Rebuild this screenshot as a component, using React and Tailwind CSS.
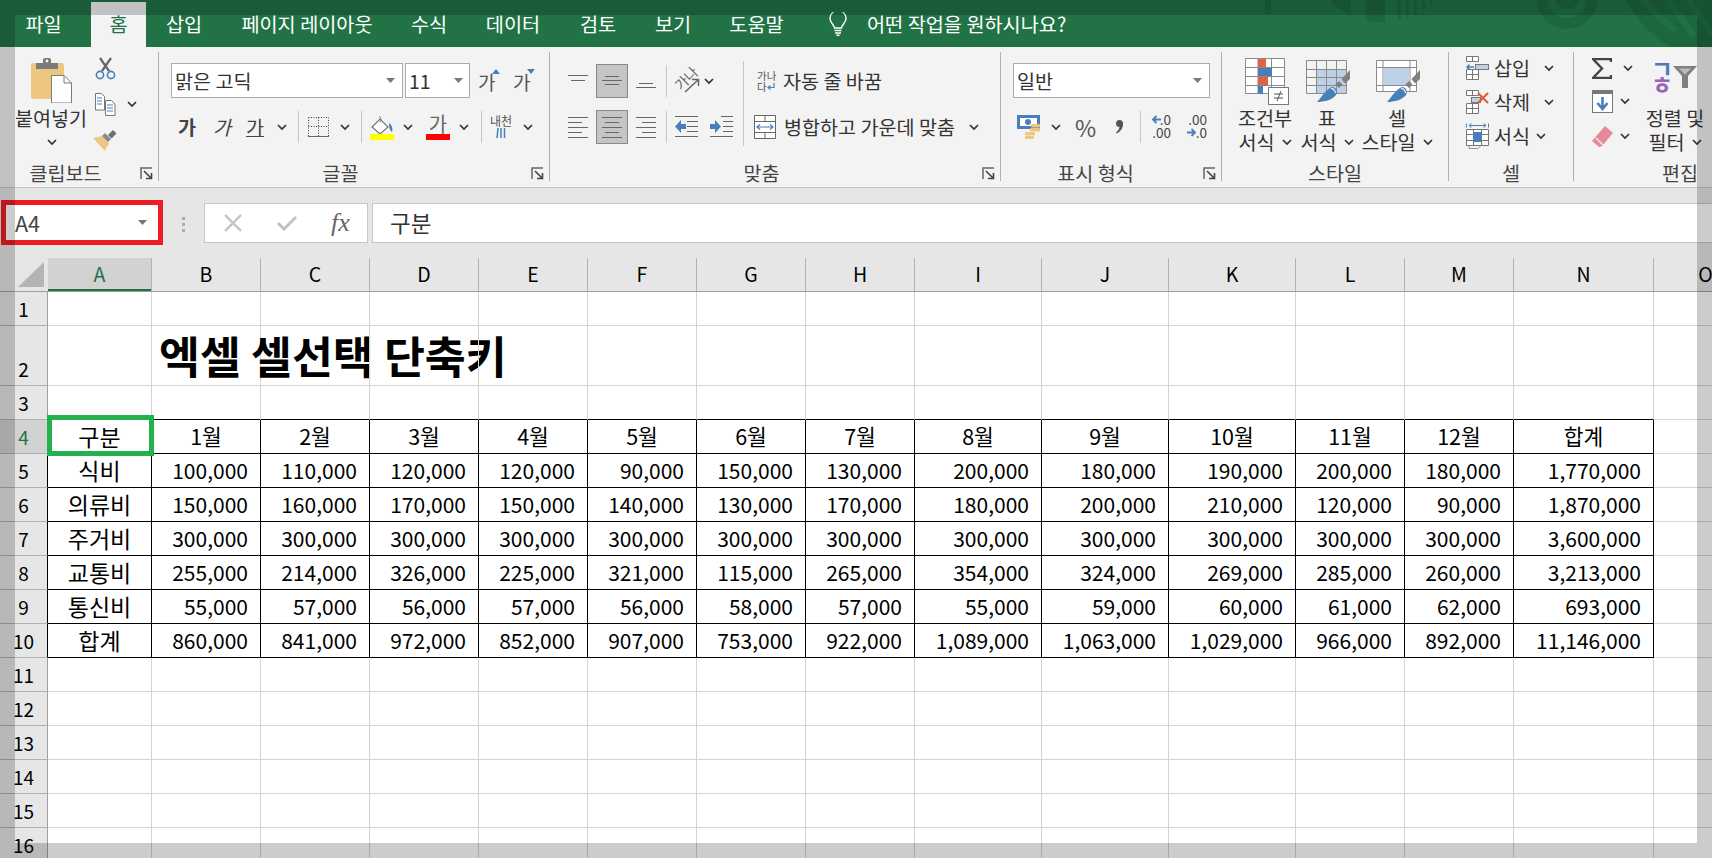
import React from 'react';

const Chevron = ({ className = '' }) => (
  <svg width="10" height="7" viewBox="0 0 10 7" className={`shrink-0 ${className}`}>
    <path d="M1 1l4 4 4-4" fill="none" stroke="#333" strokeWidth="1.7" />
  </svg>
);

const Arrow = () => (
  <svg width="9" height="5" viewBox="0 0 9 5" className="shrink-0"><path d="M0 0h9L4.5 5z" fill="#777" /></svg>
);

const Launcher = () => (
  <svg width="13" height="13" viewBox="0 0 13 13" className="shrink-0">
    <path d="M1 12V1h11" fill="none" stroke="#666" strokeWidth="1.5" />
    <path d="M4 4l7 7M11.5 6v5.5H6" fill="none" stroke="#444" strokeWidth="1.6" />
  </svg>
);

const Sep = () => <div className="w-px h-[32px] bg-[#c6c6c6] shrink-0" />;

const Lines = ({ rows }) => (
  <svg width="20" height="22" viewBox="0 0 20 22" className="shrink-0">
    {rows.map(([x1, x2, y]) => (
      <path key={y} d={`M${x1} ${y}.5H${x2}`} stroke="#666" strokeWidth="1" />
    ))}
  </svg>
);

const AlignBtn = ({ rows, on }) => (
  <div className={on ? 'w-[32px] h-[34px] bg-[#c5c5c5] border border-[#8a8a8a] flex items-center justify-center shrink-0 ml-[8px]' : 'w-[20px] h-[34px] flex items-center justify-center shrink-0 ml-[8px]'}>
    <Lines rows={rows} />
  </div>
);

const Group = ({ w, label, launcher, labelClass = '', children }) => (
  <div className={`${w} h-[129px] border-r border-[#b1b1b1] flex flex-col shrink-0`}>
    <div className="h-[108px] relative">{children}</div>
    <div className="h-[21px] flex items-center pt-[4px] text-[#444]">
      <div className={`flex-1 text-center whitespace-nowrap ${labelClass}`}>{label}</div>
      {launcher && <div className="mr-[5px] mt-[1px]"><Launcher /></div>}
    </div>
  </div>
);

const Combo = ({ className, text, arrowClass }) => (
  <div className={`h-[35px] bg-white border border-[#ababab] flex items-center justify-between shrink-0 ${className}`}>
    <span className="pl-[3px] text-[#333]">{text}</span>
    <span className={arrowClass}><Arrow /></span>
  </div>
);

const PasteIcon = () => (
  <svg width="42" height="46" viewBox="0 0 42 46">
    <rect x="0" y="6" width="33" height="36" rx="2" fill="#edc77f" />
    <path d="M5 12V6h7V3a2 2 0 012-2h4a2 2 0 012 2v3h7v6z" fill="#7b7b7b" />
    <circle cx="16" cy="4" r="1.4" fill="#f3f3f3" />
    <path d="M20.5 18.5H33L40.5 26v20h-20z" fill="#fff" stroke="#7b7b7b" strokeWidth="1" />
    <path d="M33 18.5V26h7.5" fill="none" stroke="#7b7b7b" strokeWidth="1" />
  </svg>
);

const CutIcon = () => (
  <svg width="21" height="23" viewBox="0 0 21 23">
    <path d="M7 14L16 1M14 14L5 1" stroke="#666" strokeWidth="2.2" />
    <circle cx="5" cy="18" r="3.6" fill="none" stroke="#4a7ebb" strokeWidth="1.6" />
    <circle cx="16" cy="18" r="3.6" fill="none" stroke="#4a7ebb" strokeWidth="1.6" />
  </svg>
);

const CopyIcon = () => (
  <svg width="21" height="23" viewBox="0 0 21 23">
    <path d="M.5.5h6l3 3V17H.5z" fill="#fff" stroke="#777" />
    <path d="M10.5 7.5h6l3.5 3.5v11.5h-9.5z" fill="#fff" stroke="#777" />
    <path d="M2 5h5M2 8h5M2 11h5" stroke="#4a7ebb" />
    <path d="M12 12h6M12 15h6M12 18h6" stroke="#4a7ebb" />
  </svg>
);

const PainterIcon = () => (
  <svg width="24" height="21" viewBox="0 0 24 21">
    <path d="M0 8l9-2 7 7-4 8z" fill="#edc77f" />
    <path d="M9 5l3-3 6 6-3 3z" fill="#8a8a8a" transform="translate(0 1)" />
    <path d="M15 5l5-5 3.5 3.5-5 5z" fill="#6f6f6f" />
  </svg>
);

const BorderIcon = () => (
  <svg width="21" height="20" viewBox="0 0 21 20">
    <path d="M.5.5h20v19M.5.5v19M10.5.5v19M.5 9.5h20" fill="none" stroke="#444" strokeDasharray="1 1.5" />
    <path d="M0 19.5h21" stroke="#666" />
  </svg>
);

const FillIcon = () => (
  <svg width="24" height="24" viewBox="0 0 24 24">
    <path d="M2 11l8-8 8 8-8 7z" fill="#fff" stroke="#777" strokeWidth="1.2" />
    <path d="M9 0.5c2 0 2 3 1 6" fill="none" stroke="#777" />
    <path d="M19 7c3 2 4 6 3 9-2-1-3-4-3-9z" fill="#4a7ebb" />
    <rect x="0" y="18" width="24" height="6" fill="#ffff00" />
  </svg>
);

const ColorIcon = () => (
  <div className="w-[24px] h-[26px] flex flex-col items-center shrink-0">
    <span className="text-[20px] leading-[20px] text-[#666]">가</span>
    <div className="w-full h-[6px] bg-[#ff0000]" />
  </div>
);

const PhoneticIcon = () => (
  <div className="w-[22px] h-[26px] flex flex-col items-center shrink-0">
    <span className="text-[12px] leading-[13px] text-[#555] whitespace-nowrap">내천</span>
    <svg width="10" height="12" viewBox="0 0 10 12"><path d="M2 1L1 11M5 1v10M8.5 1v10" stroke="#4a7ebb" strokeWidth="1.5" fill="none" /></svg>
  </div>
);

const GrowFont = ({ down }) => (
  <div className="w-[20px] h-[26px] flex items-end shrink-0 relative">
    <span className="text-[19px] leading-[22px] text-[#555]">가</span>
    <svg width="8" height="5" viewBox="0 0 8 5" className="absolute right-[-2px] top-[2px]">
      <path d={down ? 'M0 0h8L4 5z' : 'M0 5h8L4 0z'} fill="#4a7ebb" />
    </svg>
  </div>
);

const OrientIcon = () => (
  <div className="w-[25px] h-[28px] relative flex items-center justify-center shrink-0">
    <span className="-rotate-45 text-[14px] leading-none text-[#666] whitespace-nowrap -translate-x-[2px] -translate-y-[3px]">가나</span>
    <svg width="25" height="28" viewBox="0 0 25 28" className="absolute left-0 top-0">
      <path d="M10 25L23 13M17 12.5h6.5V19" fill="none" stroke="#666" strokeWidth="1.5" />
    </svg>
  </div>
);

const IndentIcon = ({ inc }) => (
  <svg width="23" height="22" viewBox="0 0 23 22" className="shrink-0">
    {inc ? (
      <>
        <path d="M0 8h5V4l6 6.5-6 6.5v-4H0z" fill="#4a7ebb" />
        <path d="M11 .5h12M13 5.5h10M13 10.5h10M13 15.5h10M0 20.5h23" stroke="#666" />
      </>
    ) : (
      <>
        <path d="M11 8H6V4L0 10.5 6 17v-4h5z" fill="#4a7ebb" />
        <path d="M0 .5h23M12 5.5h11M12 10.5h11M12 15.5h11M0 20.5h23" stroke="#666" />
      </>
    )}
  </svg>
);

const WrapIcon = () => (
  <div className="w-[18px] flex flex-col text-[10.5px] leading-[11px] text-[#555] shrink-0">
    <span className="whitespace-nowrap">가나</span>
    <div className="flex items-center">
      <span>다</span>
      <svg width="8" height="8" viewBox="0 0 8 8"><path d="M7 0v4.5H1.5M3.5 2.5L1 4.5l2.5 2" fill="none" stroke="#4a7ebb" strokeWidth="1.2" /></svg>
    </div>
  </div>
);

const MergeIcon = () => (
  <svg width="22" height="24" viewBox="0 0 22 24" className="shrink-0">
    <path d="M.5.5h21v23H.5zM.5 6.5h21M.5 17.5h21M11 .5v6M11 17.5v6" fill="#fff" stroke="#666" />
    <path d="M3 12h16M6 9.5L3 12l3 2.5M16 9.5l3 2.5-3 2.5" fill="none" stroke="#4a7ebb" strokeWidth="1.2" />
  </svg>
);

const CurrencyIcon = () => (
  <svg width="24" height="24" viewBox="0 0 24 24" className="shrink-0">
    <rect x="0" y="0" width="23" height="14" fill="#4a7ebb" />
    <rect x="3" y="3" width="17" height="8" fill="#fff" />
    <circle cx="11" cy="7" r="3" fill="#4a7ebb" />
    <rect x="14" y="9" width="9" height="3.5" rx="1" fill="#edc77f" />
    <rect x="13" y="13" width="10" height="3.5" rx="1" fill="#edc77f" />
    <rect x="8" y="17" width="10" height="3.5" rx="1" fill="#edc77f" />
    <rect x="8" y="21" width="9" height="3" rx="1" fill="#edc77f" />
  </svg>
);

const CommaIcon = () => (
  <svg width="8" height="14" viewBox="0 0 8 14" className="shrink-0">
    <circle cx="4.5" cy="3.5" r="3.5" fill="#555" />
    <path d="M8 4c0 4-2 7-6 9.5L1 12.5c2.5-2 3.5-4 3.5-6z" fill="#555" />
  </svg>
);

const DecimalIcon = ({ top, bottom, left, inc }) => (
  <div className="w-[22px] h-[28px] flex flex-col text-[13.5px] leading-[13px] text-[#444] shrink-0">
    {[top, bottom].map((t, i) => (
      <div key={i} className="flex items-center justify-end h-[13px]">
        {left === i && (
          <svg width="10" height="9" viewBox="0 0 10 9" className="mr-[-1px]">
            <path d={inc ? 'M0 4.5h7M4.5 1L8 4.5 4.5 8' : 'M10 4.5H3M5.5 1L2 4.5 5.5 8'} fill="none" stroke="#4a7ebb" strokeWidth="1.8" />
          </svg>
        )}
        <span>{t}</span>
      </div>
    ))}
  </div>
);

const CfIcon = () => (
  <svg width="44" height="47" viewBox="0 0 44 47">
    <path d="M.5.5h39v35H.5zM.5 9.5h39M.5 18.5h39M.5 27.5h39M13 .5v35M26.5 .5v35" fill="#fff" stroke="#8a8a8a" />
    <rect x="13" y="1" width="8" height="8" fill="#dd6344" />
    <rect x="13" y="10" width="14" height="8" fill="#4a7ebb" />
    <rect x="13" y="19" width="10" height="8" fill="#dd6344" />
    <rect x="13" y="28" width="5" height="8" fill="#4a7ebb" />
    <rect x="23.5" y="29.5" width="20" height="17" fill="#fff" stroke="#777" />
    <path d="M29 36h9M29 40h9M36 33l-4 10" fill="none" stroke="#555" />
  </svg>
);

const Brush = () => (
  <>
    <path d="M11 42C16 37 19 30 26 27c4 0 6 4 4 8-4 5-12 7-19 7z" fill="#4a7ebb" />
    <path d="M25 29c2-1 4 1 4.5 4" fill="none" stroke="#f3f3f3" strokeWidth="1.2" />
    <path d="M33 21l3.5 3.5L33 28l-3.5-3.5z" fill="#808080" />
    <path d="M35.5 19L44 10v9l-5 4.5z" fill="#808080" />
  </>
);

const TableIcon = () => (
  <svg width="46" height="44" viewBox="0 0 46 44">
    <rect x="10" y="10" width="30" height="24" fill="#bdd0e6" />
    <path d="M.5.5h40v33H.5zM.5 9.5h40M.5 17.5h40M.5 25.5h40M10.5 .5v33M20.5 .5v33M30.5 .5v33" fill="none" stroke="#8a8a8a" />
    <Brush />
  </svg>
);

const CellStyleIcon = () => (
  <svg width="46" height="44" viewBox="0 0 46 44">
    <path d="M.5.5h40v31H.5z" fill="#fff" stroke="#8a8a8a" />
    <path d="M7 .5v31M34 .5v31M.5 7.5h40M.5 25.5h40" fill="none" stroke="#8a8a8a" />
    <rect x="7.5" y="8" width="26" height="17" fill="#bdd0e6" />
    <Brush />
  </svg>
);

const InsertIcon = () => (
  <svg width="23" height="24" viewBox="0 0 23 24" className="shrink-0">
    <path d="M.5.5h12v5H.5zM.5 13.5h12v10H.5zM.5 18.5h12M6.5 13.5v10M6.5 .5v5" fill="#fff" stroke="#777" />
    <rect x="9.5" y="8.5" width="13" height="5" fill="#bdd0e6" stroke="#777" />
    <path d="M8 11H1M3.5 8.5L1 11l2.5 2.5" fill="none" stroke="#4a7ebb" strokeWidth="1.5" />
  </svg>
);

const DeleteIcon = () => (
  <svg width="23" height="24" viewBox="0 0 23 24" className="shrink-0">
    <path d="M.5.5h12v5H.5zM.5 13.5h12v10H.5zM.5 18.5h12M6.5 13.5v10M6.5 .5v5" fill="#fff" stroke="#777" />
    <rect x="5.5" y="7.5" width="9" height="5" fill="#bdd0e6" stroke="#777" />
    <path d="M12 3l10 10M22 3L12 13" stroke="#dd5a36" strokeWidth="2" />
  </svg>
);

const FormatIcon = () => (
  <svg width="23" height="26" viewBox="0 0 23 26" className="shrink-0">
    <path d="M.5.5v4M22.5 .5v4M3 2.5h17M5.5 .5L3 2.5l2.5 2M17.5 .5L20 2.5l-2.5 2" fill="none" stroke="#4a7ebb" />
    <path d="M.5 6.5h22v16H.5zM.5 11.5h22M.5 17.5h22M7.5 6.5v16M15.5 6.5v16" fill="#fff" stroke="#777" />
    <rect x="7" y="9" width="9" height="10" fill="#4a7ebb" />
    <path d="M3 22.5v3h9l3-3" fill="none" stroke="#999" />
  </svg>
);

const SumIcon = () => (
  <svg width="20" height="21" viewBox="0 0 20 21" className="shrink-0">
    <path d="M19 4V1H1l9 9.5L1 20h18v-3" fill="none" stroke="#444" strokeWidth="2.4" />
  </svg>
);

const FillDownIcon = () => (
  <svg width="21" height="23" viewBox="0 0 21 23" className="shrink-0">
    <rect x=".5" y=".5" width="20" height="22" fill="#fff" stroke="#777" />
    <rect x="0" y="0" width="21" height="4" fill="#777" />
    <path d="M10.5 7v12M5.5 13l5 6 5-6" fill="none" stroke="#4a7ebb" strokeWidth="2.6" />
  </svg>
);

const EraserIcon = () => (
  <svg width="21" height="21" viewBox="0 0 21 21" className="shrink-0">
    <path d="M13 0l8 7-11 13-3 1-7-6z" fill="#e8899b" />
    <path d="M4 12l7 7" stroke="#f3f3f3" strokeWidth="1.2" />
  </svg>
);

const SortIcon = () => (
  <div className="relative w-[62px] h-[34px] shrink-0">
    <span className="absolute left-[-3px] top-[-6px] text-[24px] leading-[26px] font-bold text-[#4a7ebb]">ㄱ</span>
    <span className="absolute left-[-3px] top-[10px] text-[24px] leading-[26px] font-bold text-[#9a64b8]">ㅎ</span>
    <svg width="24" height="22" viewBox="0 0 24 22" className="absolute left-[19px] top-[5px]">
      <path d="M0 0h24L15 10v12H9V10z" fill="#808080" />
      <path d="M6 2.5h12l-6 6z" fill="#bdbdbd" />
    </svg>
  </div>
);

const tabs = [
  ['파일', 'w-[91px] pr-[4px]'],
  ['홈', 'w-[55px] bg-[#f3f3f3] text-[#217346]'],
  ['삽입', 'w-[76px]'],
  ['페이지 레이아웃', 'w-[170px]'],
  ['수식', 'w-[74px]'],
  ['데이터', 'w-[94px]'],
  ['검토', 'w-[76px]'],
  ['보기', 'w-[74px]'],
  ['도움말', 'w-[93px]'],
];

const TitleBar = () => (
  <div className="relative h-[47px] shrink-0 bg-[#217346] pt-[2px] flex text-white text-[19.7px] leading-[43px] overflow-hidden">
    <svg width="512" height="47" viewBox="1200 0 512 47" className="absolute right-0 top-0">
      <g fill="#000" fillOpacity="0.1">
        <rect x="1265" y="0" width="6" height="14" />
        <path d="M1332 0h19v15l-19-11z" />
        <path d="M1366 0h19v23l-19-2z" />
        <path d="M1398 0h3v20h-3zM1406 0h3v17h-3zM1414 0h3v15h-3zM1422 0h3v10h-3zM1430 0h2v5h-2z" />
        <path fillRule="evenodd" d="M1567 29a31 31 0 000-62 31 31 0 000 62zm0-11a20 20 0 010-40 20 20 0 010 40z" />
        <circle cx="1567" cy="-3" r="12" />
        <circle cx="1730" cy="-55" r="118" />
      </g>
      <path d="M1642 0l33 31M1668 0l26 36M1688 0l24 34" stroke="#217346" strokeOpacity="0.8" strokeWidth="6" fill="none" />
    </svg>
    {tabs.map(([t, c]) => (
      <div key={t} className={`relative text-center whitespace-nowrap shrink-0 ${c}`}>{t}</div>
    ))}
    <svg width="20" height="24" viewBox="0 0 20 24" className="relative ml-[25px] mt-[10px] shrink-0">
      <path d="M6.5 16c0-3-4.5-5-4.5-9.5a7.7 7.7 0 0116 0c0 4.5-4.5 6.5-4.5 9.5z" fill="none" stroke="#fff" strokeWidth="1.4" />
      <path d="M6.5 18.5h7M7 21h6M8.5 23.2h3" stroke="#fff" strokeWidth="1.4" />
    </svg>
    <div className="relative ml-[19px] whitespace-nowrap">어떤 작업을 원하시나요?</div>
  </div>
);

const Ribbon = () => (
  <div className="h-[141px] shrink-0 bg-[#f3f3f3] border-b border-[#c6c6c6] pt-[5px] flex text-[19.6px] text-[#333] overflow-hidden">
    <Group w="w-[159px]" label="클립보드" launcher labelClass="pr-[9px]">
      <div className="flex h-full">
        <div className="w-[104px] flex flex-col items-center pt-[5px]">
          <PasteIcon />
          <div className="mt-[2px] leading-[26px] whitespace-nowrap -ml-[2px]">붙여넣기</div>
          <Chevron className="mt-[8px]" />
        </div>
        <div className="flex flex-col items-start pt-[5px] -ml-[9px]">
          <CutIcon />
          <div className="flex items-center mt-[13px]"><CopyIcon /><Chevron className="ml-[11px]" /></div>
          <div className="mt-[14px] -ml-[2px]"><PainterIcon /></div>
        </div>
      </div>
    </Group>

    <Group w="w-[391px]" label="글꼴" launcher labelClass="pr-[9px]">
      <div className="flex items-start pl-[12px] pt-[11px]">
        <Combo className="w-[232px]" text="맑은 고딕" arrowClass="pr-[7px]" />
        <Combo className="w-[65px] ml-[2px]" text="11" arrowClass="pr-[6px]" />
        <div className="ml-[8px] mt-[4px]"><GrowFont /></div>
        <div className="ml-[15px] mt-[4px]"><GrowFont down /></div>
      </div>
      <div className="flex items-center pl-[19px] mt-[16px] h-[26px]">
        <span className="w-[18px] font-bold text-[#444]">가</span>
        <span className="w-[18px] ml-[17px] italic text-[#444]">가</span>
        <span className="w-[18px] ml-[15px] underline text-[#444]">가</span>
        <Chevron className="ml-[13px]" />
        <div className="ml-[11px]"><Sep /></div>
        <div className="ml-[9px]"><BorderIcon /></div>
        <Chevron className="ml-[11px]" />
        <div className="ml-[11px]"><Sep /></div>
        <div className="ml-[8px] mt-[1px]"><FillIcon /></div>
        <Chevron className="ml-[9px]" />
        <div className="ml-[13px]"><ColorIcon /></div>
        <Chevron className="ml-[9px]" />
        <div className="ml-[12px]"><Sep /></div>
        <div className="ml-[8px]"><PhoneticIcon /></div>
        <Chevron className="ml-[11px]" />
      </div>
    </Group>

    <Group w="w-[451px]" label="맞춤" launcher labelClass="pr-[9px]">
      <div className="flex h-full">
        <div className="w-[193px] pt-[12px] shrink-0">
          <div className="flex items-center pl-[10px] h-[34px]">
            <AlignBtn rows={[[0, 20, 5], [3, 17, 10]]} />
            <AlignBtn on rows={[[3, 17, 6], [0, 20, 10], [3, 17, 14]]} />
            <AlignBtn rows={[[3, 17, 13], [0, 20, 17]]} />
            <div className="ml-[10px]"><Sep /></div>
            <div className="ml-[8px]"><OrientIcon /></div>
            <Chevron className="ml-[4px]" />
          </div>
          <div className="flex items-center pl-[10px] h-[34px] mt-[12px]">
            <AlignBtn rows={[[0, 20, 1], [0, 14, 6], [0, 20, 11], [0, 14, 16], [0, 20, 21]]} />
            <AlignBtn on rows={[[0, 20, 1], [3, 17, 6], [0, 20, 11], [3, 17, 16], [0, 20, 21]]} />
            <AlignBtn rows={[[0, 20, 1], [6, 20, 6], [0, 20, 11], [6, 20, 16], [0, 20, 21]]} />
            <div className="ml-[10px]"><Sep /></div>
            <div className="ml-[8px]"><IndentIcon /></div>
            <div className="ml-[12px]"><IndentIcon inc /></div>
          </div>
        </div>
        <div className="w-px h-[85px] mt-[9px] bg-[#c6c6c6] shrink-0" />
        <div className="pt-[12px]">
          <div className="flex items-center h-[34px] pl-[13px]">
            <WrapIcon />
            <span className="ml-[8px] whitespace-nowrap">자동 줄 바꿈</span>
          </div>
          <div className="flex items-center h-[34px] mt-[12px] pl-[10px]">
            <MergeIcon />
            <span className="ml-[8px] whitespace-nowrap">병합하고 가운데 맞춤</span>
            <Chevron className="ml-[14px]" />
          </div>
        </div>
      </div>
    </Group>

    <Group w="w-[221px]" label="표시 형식" launcher labelClass="pr-[13px]">
      <div className="pl-[12px] pt-[11px]">
        <Combo className="w-[197px]" text="일반" arrowClass="pr-[7px]" />
      </div>
      <div className="flex items-center pl-[16px] mt-[16px] h-[26px]">
        <CurrencyIcon />
        <Chevron className="ml-[10px]" />
        <span className="ml-[14px] w-[21px] text-[23px] leading-none text-[#555]">%</span>
        <div className="ml-[19px]"><CommaIcon /></div>
        <div className="ml-[17px]"><Sep /></div>
        <div className="ml-[8px]"><DecimalIcon top=".0" bottom=".00" left={0} /></div>
        <div className="ml-[14px]"><DecimalIcon top=".00" bottom=".0" left={1} inc /></div>
      </div>
    </Group>

    <Group w="w-[227px]" label="스타일">
      <div className="flex pl-[10px] pt-[6px] leading-[24px]">
        <div className="w-[66px] flex flex-col items-center">
          <div className="h-[48px] ml-[4px]"><CfIcon /></div>
          <span>조건부</span>
          <div className="flex items-center">서식<Chevron className="ml-[7px]" /></div>
        </div>
        <div className="w-[58px] flex flex-col items-center">
          <div className="h-[48px] pt-[2px] ml-[4px]"><TableIcon /></div>
          <span>표</span>
          <div className="flex items-center">서식<Chevron className="ml-[7px]" /></div>
        </div>
        <div className="w-[82px] flex flex-col items-center">
          <div className="h-[48px] pt-[2px] ml-[4px]"><CellStyleIcon /></div>
          <span>셀</span>
          <div className="flex items-center">스타일<Chevron className="ml-[7px]" /></div>
        </div>
      </div>
    </Group>

    <Group w="w-[125px]" label="셀">
      <div className="pl-[17px] -mt-[1px]">
        <div className="flex items-center h-[34px]"><InsertIcon /><span className="ml-[5px]">삽입</span><Chevron className="ml-[14px]" /></div>
        <div className="flex items-center h-[34px]"><DeleteIcon /><span className="ml-[5px]">삭제</span><Chevron className="ml-[14px]" /></div>
        <div className="flex items-center h-[34px]"><FormatIcon /><span className="ml-[5px]">서식</span><Chevron className="ml-[6px]" /></div>
      </div>
    </Group>

    <div className="w-[212px] h-[129px] flex flex-col shrink-0">
      <div className="h-[108px] flex">
        <div className="w-[66px] pl-[18px] shrink-0">
          <div className="flex items-center h-[33px]"><SumIcon /><Chevron className="ml-[11px]" /></div>
          <div className="flex items-center h-[33px]"><FillDownIcon /><Chevron className="ml-[7px]" /></div>
          <div className="flex items-center h-[36px]"><EraserIcon /><Chevron className="ml-[7px]" /></div>
        </div>
        <div className="w-[70px] flex flex-col items-center leading-[24px] pt-[9px] shrink-0">
          <div className="h-[45px] self-start ml-[14px]"><SortIcon /></div>
          <span className="whitespace-nowrap">정렬 및</span>
          <div className="flex items-center">필터<Chevron className="ml-[7px]" /></div>
        </div>
      </div>
      <div className="h-[21px] pt-[4px] flex items-center justify-center text-[#444]">편집</div>
    </div>
  </div>
);

const FormulaBar = () => (
  <div className="h-[70px] shrink-0 bg-[#e6e6e6] flex overflow-hidden">
    <div className="ml-[1px] mt-[12px] w-[162px] h-[45px] bg-white border-[5px] border-[#ed1c24] flex items-center justify-between pl-[9px] pr-[11px] shrink-0">
      <span className="text-[21.5px] text-[#444] pt-[2px]">A4</span>
      <Arrow />
    </div>
    <div className="w-[41px] flex flex-col items-center justify-center gap-[3px] shrink-0 pt-[2px]">
      <div className="w-[3px] h-[3px] bg-[#adadad]" />
      <div className="w-[3px] h-[3px] bg-[#adadad]" />
      <div className="w-[3px] h-[3px] bg-[#adadad]" />
    </div>
    <div className="mt-[15px] w-[164px] h-[40px] bg-white border border-[#c6c6c6] flex items-center shrink-0">
      <svg width="18" height="18" viewBox="0 0 18 18" className="ml-[19px]"><path d="M1 1l16 16M17 1L1 17" stroke="#c2c2c2" strokeWidth="2.4" /></svg>
      <svg width="20" height="16" viewBox="0 0 20 16" className="ml-[35px]"><path d="M1 8l6 6L19 2" fill="none" stroke="#c2c2c2" strokeWidth="3" /></svg>
      <span className="ml-[34px] text-[26px] leading-none italic text-[#666] font-['Liberation_Serif',serif]">fx</span>
    </div>
    <div className="ml-[4px] mt-[15px] flex-1 h-[40px] bg-white border-y border-l border-[#c6c6c6] flex items-center pl-[17px] text-[22.5px] text-[#333]">
      구분
    </div>
  </div>
);

const columns = [
  ['A', 'w-[104px]'], ['B', 'w-[109px]'], ['C', 'w-[109px]'], ['D', 'w-[109px]'], ['E', 'w-[109px]'],
  ['F', 'w-[109px]'], ['G', 'w-[109px]'], ['H', 'w-[109px]'], ['I', 'w-[127px]'], ['J', 'w-[127px]'],
  ['K', 'w-[127px]'], ['L', 'w-[109px]'], ['M', 'w-[109px]'], ['N', 'w-[140px]'], ['O', 'w-[104px]'],
];

const tableRows = {
  4: ['구분', '1월', '2월', '3월', '4월', '5월', '6월', '7월', '8월', '9월', '10월', '11월', '12월', '합계'],
  5: ['식비', '100,000', '110,000', '120,000', '120,000', '90,000', '150,000', '130,000', '200,000', '180,000', '190,000', '200,000', '180,000', '1,770,000'],
  6: ['의류비', '150,000', '160,000', '170,000', '150,000', '140,000', '130,000', '170,000', '180,000', '200,000', '210,000', '120,000', '90,000', '1,870,000'],
  7: ['주거비', '300,000', '300,000', '300,000', '300,000', '300,000', '300,000', '300,000', '300,000', '300,000', '300,000', '300,000', '300,000', '3,600,000'],
  8: ['교통비', '255,000', '214,000', '326,000', '225,000', '321,000', '115,000', '265,000', '354,000', '324,000', '269,000', '285,000', '260,000', '3,213,000'],
  9: ['통신비', '55,000', '57,000', '56,000', '57,000', '56,000', '58,000', '57,000', '55,000', '59,000', '60,000', '61,000', '62,000', '693,000'],
  10: ['합계', '860,000', '841,000', '972,000', '852,000', '907,000', '753,000', '922,000', '1,089,000', '1,063,000', '1,029,000', '966,000', '892,000', '11,146,000'],
};

const rowNumbers = [1, 2, 3, 4, 5, 6, 7, 8, 9, 10, 11, 12, 13, 14, 15, 16];

const Cell = ({ col, colIndex, row }) => {
  const data = tableRows[row];
  const text = data ? data[colIndex] : undefined;
  const inTable = data && colIndex < 14;
  const bottomBlack = (data || row === 3) && colIndex < 14;
  let cls = `${col} h-full shrink-0 border-r border-b flex items-center `;
  cls += inTable ? 'border-r-black ' : 'border-r-[#d4d4d4] ';
  cls += bottomBlack ? 'border-b-black ' : 'border-b-[#d4d4d4] ';
  if (row === 2 && colIndex === 1) {
    return (
      <div className={cls}>
        <span className="pl-[7px] text-[44.5px] font-bold text-black whitespace-nowrap">엑셀 셀선택 단축키</span>
      </div>
    );
  }
  if (text) {
    let type = 'justify-end pr-[12px] text-[21px]';
    if (colIndex === 0) type = 'justify-center text-[23px]';
    else if (row === 4) type = 'justify-center text-[21.5px]';
    return <div className={`${cls} ${type} text-black`}>{text}</div>;
  }
  return <div className={cls} />;
};

const Sheet = () => (
  <div className="relative flex-1 bg-white">
    <div className="flex h-[34px] bg-[#e6e6e6] border-b border-[#9f9f9f]">
      <div className="w-[48px] shrink-0 relative">
        <svg width="27" height="26" viewBox="0 0 27 26" className="absolute left-[18px] top-[4px]"><path d="M26 0v25H0z" fill="#b4b4b4" /></svg>
      </div>
      {columns.map(([name, w], i) => (
        <div
          key={name}
          className={`${w} shrink-0 flex items-center justify-center pb-[2px] text-[19.5px] border-r border-[#b2b2b2] ${i === 0 ? 'bg-[#d2d2d2] text-[#217346] shadow-[inset_0_-2px_0_#217346]' : 'text-black'}`}
        >
          {name}
        </div>
      ))}
    </div>
    {rowNumbers.map((row) => (
      <div key={row} className={row === 2 ? 'flex h-[60px]' : 'flex h-[34px]'}>
        <div
          className={`w-[48px] shrink-0 flex items-end justify-center leading-[33px] text-[19px] border-b border-[#b0b0b0] border-r ${tableRows[row] ? 'border-r-black' : 'border-r-[#9f9f9f]'} ${row === 4 ? 'bg-[#d2d2d2] text-[#217346]' : 'bg-[#e6e6e6] text-black'}`}
        >
          {row}
        </div>
        {columns.map(([name, w], i) => (
          <Cell key={name} col={w} colIndex={i} row={row} />
        ))}
      </div>
    ))}
    <div className="absolute left-[47px] top-[157px] w-[107px] h-[41px] border-[5px] border-[#22b14c]" />
  </div>
);

const App = () => {
  return (
    <div className="relative w-[1712px] h-[858px] overflow-hidden flex flex-col bg-white font-['Noto_Sans_CJK_KR',sans-serif]">
      <TitleBar />
      <Ribbon />
      <FormulaBar />
      <Sheet />
      {/* dimmed frame around the highlighted area */}
      <div className="absolute left-[15px] top-[15px] w-[1682px] h-[828px] shadow-[0_0_0_1000px_rgba(0,0,0,0.2)] pointer-events-none" />
    </div>
  );
};

export default App;
